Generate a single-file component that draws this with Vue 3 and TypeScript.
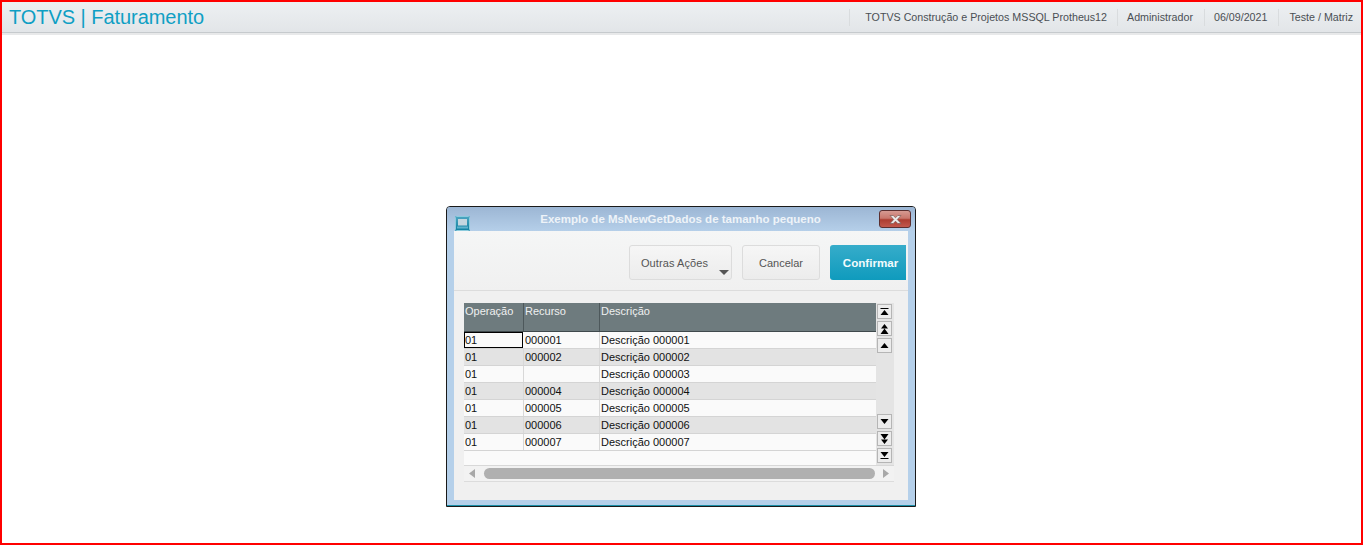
<script setup lang="ts">
interface Row {
  op: string
  recurso: string
  descricao: string
}

const infos = ['TOTVS Construção e Projetos MSSQL Protheus12', 'Administrador', '06/09/2021', 'Teste / Matriz']

const rows: Row[] = [
  { op: '01', recurso: '000001', descricao: 'Descrição 000001' },
  { op: '01', recurso: '000002', descricao: 'Descrição 000002' },
  { op: '01', recurso: '', descricao: 'Descrição 000003' },
  { op: '01', recurso: '000004', descricao: 'Descrição 000004' },
  { op: '01', recurso: '000005', descricao: 'Descrição 000005' },
  { op: '01', recurso: '000006', descricao: 'Descrição 000006' },
  { op: '01', recurso: '000007', descricao: 'Descrição 000007' },
]
</script>

<template>
  <div class="page">
    <header class="topbar">
      <h1 class="brand">TOTVS | Faturamento</h1>
      <ul class="infos">
        <li v-for="info in infos" :key="info">{{ info }}</li>
      </ul>
    </header>

    <main class="desk">
      <section class="dialog">
        <div class="titlebar">
          <span class="app-icon">
            <svg width="15" height="15" viewBox="0 0 15 15">
              <defs>
                <linearGradient id="appbg" x1="0" y1="0" x2="0" y2="1">
                  <stop offset="0" stop-color="#4fa6c2" />
                  <stop offset="1" stop-color="#0e7f9f" />
                </linearGradient>
              </defs>
              <rect x="0" y="0" width="15" height="15" rx="1" fill="url(#appbg)" />
              <rect x="0.5" y="0.5" width="14" height="14" rx="1" fill="none" stroke="#8ccbdd" />
              <rect x="3" y="3" width="9" height="6.500" fill="#c4d6df" />
              <path d="M2 10.500h11v2H2z" fill="#5fb3cc" />
            </svg>
          </span>
          <span class="title-text">Exemplo de MsNewGetDados de tamanho pequeno</span>
          <button class="close" aria-label="Fechar">
            <svg width="13" height="9" viewBox="0 0 13 9">
              <path d="M1 0.500h3.200L6.500 2.800 8.800 0.500H12L8.300 4.500 12 8.500H8.800L6.500 6.200 4.200 8.500H1L4.700 4.500z" fill="#efefef" stroke="#7a5c58" stroke-width="0.700" />
            </svg>
          </button>
        </div>

        <div class="content">
          <div class="toolbar">
            <button class="btn btn-menu">
              Outras Ações
              <i class="caret"></i>
            </button>
            <button class="btn btn-cancel">Cancelar</button>
            <button class="btn btn-confirm">Confirmar</button>
          </div>

          <div class="grid-wrap">
            <div class="grid-main">
              <div class="table">
                <div class="head">
                  <div class="hcell c-op">Operação</div>
                  <div class="hcell c-rec">Recurso</div>
                  <div class="hcell c-desc">Descrição</div>
                </div>
                <div v-for="(row, i) in rows" :key="row.descricao" class="row" :class="{ even: i % 2 === 1 }">
                  <div class="cell c-op" :class="{ focused: i === 0 }">{{ row.op }}</div>
                  <div class="cell c-rec">{{ row.recurso }}</div>
                  <div class="cell c-desc">{{ row.descricao }}</div>
                </div>
              </div>

              <div class="vscroll">
                <div class="vgroup">
                  <button class="sbtn">
                    <svg width="9" height="7" viewBox="0 0 9 7"><path d="M.5 0h8v1h-8zM4.500 2 8.500 7h-8z" fill="#000" /></svg>
                  </button>
                  <button class="sbtn">
                    <svg width="9" height="10" viewBox="0 0 9 10"><path d="M4.500 0 8 4.500H1zM4.500 4.500 8.500 10h-8z" fill="#000" /></svg>
                  </button>
                  <button class="sbtn">
                    <svg width="9" height="5" viewBox="0 0 9 5"><path d="M4.500 0 8.500 5h-8z" fill="#000" /></svg>
                  </button>
                </div>
                <div class="vgroup">
                  <button class="sbtn">
                    <svg width="9" height="5" viewBox="0 0 9 5"><path d="M.5 0h8L4.500 5z" fill="#000" /></svg>
                  </button>
                  <button class="sbtn">
                    <svg width="9" height="10" viewBox="0 0 9 10"><path d="M.5 0h8L4.500 5.500zM1 5.500h7L4.500 10z" fill="#000" /></svg>
                  </button>
                  <button class="sbtn">
                    <svg width="9" height="7" viewBox="0 0 9 7"><path d="M.5 0h8L4.500 5zM.5 6h8v1h-8z" fill="#000" /></svg>
                  </button>
                </div>
              </div>
            </div>

            <div class="hscroll">
              <svg class="arrow" width="6" height="9" viewBox="0 0 6 9"><path d="M6 0v9L0 4.500z" fill="#a8a8a8" /></svg>
              <div class="thumb"></div>
              <svg class="arrow" width="6" height="9" viewBox="0 0 6 9"><path d="M0 0v9l6-4.500z" fill="#a8a8a8" /></svg>
            </div>
          </div>
        </div>
      </section>
    </main>
  </div>
</template>

<style>
html, body {
  margin: 0;
  background: #fff;
}
</style>

<style scoped>
.page {
  box-sizing: border-box;
  width: 1363px;
  height: 545px;
  border: 2px solid #f00;
  font-family: "Liberation Sans", Arial, sans-serif;
  overflow: hidden;
}

.topbar {
  box-sizing: border-box;
  height: 33px;
  display: flex;
  align-items: center;
  justify-content: space-between;
  background: linear-gradient(#edf0f2, #e2e5e8);
  border-bottom: 2px solid #e8e9ea;
  box-shadow: inset 0 -1px 0 #c6cacd;
  padding-left: 7px;
}
.brand {
  margin: 0;
  font-size: 20px;
  font-weight: normal;
  letter-spacing: -0.05px;
  color: #0f9fc4;
}
.infos {
  display: flex;
  list-style: none;
  margin: 0;
  padding: 0;
  font-size: 10.7px;
  color: #4a4f54;
}
.infos li {
  padding: 0 10px 0 9px;
  line-height: 17px;
  border-left: 1px solid #d9dcde;
}
.infos li:first-child {
  padding-left: 15px;
}
.infos li:nth-child(2) {
  padding-right: 11px;
}
.infos li:nth-child(3) {
  padding-right: 11px;
}
.infos li:last-child {
  padding-right: 8px;
  padding-left: 10px;
}

.desk {
  display: flex;
  justify-content: center;
  padding-top: 171px;
  padding-right: 1px;
}

.dialog {
  box-sizing: border-box;
  width: 470px;
  height: 301px;
  display: flex;
  flex-direction: column;
  border: 1px solid #1a1a1a;
  border-radius: 4px 4px 0 0;
  background: #b5d0ea;
  padding: 0 7px 6px;
  box-shadow: inset 0 -1px 0 #1b8fa8;
}

.titlebar {
  height: 24px;
  flex: none;
  display: flex;
  align-items: center;
  justify-content: center;
  position: relative;
  margin: 0 -7px;
  background: linear-gradient(#9cb6d4, #b5cfe9);
  border-radius: 3px 3px 0 0;
}
.app-icon {
  position: absolute;
  left: 8px;
  top: 9px;
  display: flex;
}
.title-text {
  font-size: 11.500px;
  font-weight: bold;
  color: #eef3f8;
  padding-right: 1px;
}
.close {
  position: absolute;
  right: 4px;
  top: 3px;
  box-sizing: border-box;
  width: 32px;
  height: 18px;
  padding: 0;
  display: flex;
  align-items: center;
  justify-content: center;
  border: 1px solid #5b2f30;
  border-radius: 3px;
  background: linear-gradient(#d69a92 0, #c9776d 45%, #ad3d31 55%, #c2584c 100%);
}

.content {
  flex: 1;
  display: flex;
  flex-direction: column;
  background: #f0f0f0;
}

.toolbar {
  box-sizing: border-box;
  height: 60px;
  flex: none;
  display: flex;
  align-items: flex-start;
  gap: 10px;
  padding: 14px 2px 0 175px;
  background: linear-gradient(#f5f6f6, #f0f0f0);
  border-bottom: 1px solid #dcdcdc;
}

.btn {
  box-sizing: border-box;
  height: 35px;
  padding: 0;
  font-family: inherit;
  font-size: 11px;
  color: #555;
  border: 1px solid #dcdcdc;
  border-radius: 3px;
  background: linear-gradient(#f6f6f6, #ececec);
}
.btn-menu {
  width: 103px;
  position: relative;
  padding-right: 12px;
  letter-spacing: 0.1px;
}
.caret {
  position: absolute;
  right: 2px;
  bottom: 4px;
  border-left: 5px solid transparent;
  border-right: 5px solid transparent;
  border-top: 5px solid #555;
}
.btn-cancel {
  width: 78px;
}
.btn-confirm {
  width: 76px;
  padding-left: 5px;
  font-size: 11.600px;
  font-weight: bold;
  color: #f2fbfd;
  border: none;
  border-radius: 3px 0 0 3px;
  background: linear-gradient(#36acca, #0f9bbd);
}

.grid-wrap {
  padding: 12px 0 0 10px;
  width: 430px;
}
.grid-main {
  display: flex;
  height: 162px;
  border-bottom: 1px solid #d8d8d8;
  background: #fafafa;
}
.table {
  width: 412px;
  font-size: 11px;
  color: #111;
}
.head {
  height: 29px;
  display: flex;
  background: #6e7b7e;
  border-bottom: 1px solid #3f494c;
  box-sizing: border-box;
  color: #eef0f0;
}
.hcell {
  box-sizing: border-box;
  padding: 2px 0 0 1px;
  line-height: 13px;
  border-right: 1px solid #4d585b;
}
.row {
  box-sizing: border-box;
  height: 17px;
  display: flex;
  background: #fafafa;
  border-bottom: 1px solid #d4d4d4;
}
.row.even {
  background: #e3e3e3;
}
.cell {
  box-sizing: border-box;
  padding-left: 1px;
  line-height: 16px;
  border-right: 1px solid #d8d8d8;
}
.c-op {
  width: 60px;
}
.c-rec {
  width: 76px;
}
.c-desc {
  flex: 1;
  border-right: none;
}
.cell.focused {
  outline: 1px dotted #000;
  outline-offset: -1px;
  border: 1px solid #000;
  padding-left: 0;
  line-height: 14px;
  width: 59px;
  margin-right: 1px;
}

.vscroll {
  flex: 1;
  display: flex;
  flex-direction: column;
  justify-content: space-between;
  align-items: flex-start;
  padding: 1px 0 2px 1px;
  background: #e4e4e4;
}
.vgroup {
  display: flex;
  flex-direction: column;
  gap: 2px;
}
.sbtn {
  box-sizing: border-box;
  width: 15px;
  height: 15px;
  padding: 0;
  display: flex;
  align-items: center;
  justify-content: center;
  border: 1px solid #b5b5b5;
  background: #ececec;
}

.hscroll {
  box-sizing: border-box;
  height: 16px;
  display: flex;
  align-items: center;
  padding: 0 5px 0 5px;
  border-bottom: 1px solid #dcdcdc;
  background: #f2f2f2;
}
.arrow {
  flex: none;
}
.thumb {
  width: 391px;
  height: 11px;
  margin: 0 8px 0 9px;
  border-radius: 6px;
  background: #b0b0b0;
}
</style>
